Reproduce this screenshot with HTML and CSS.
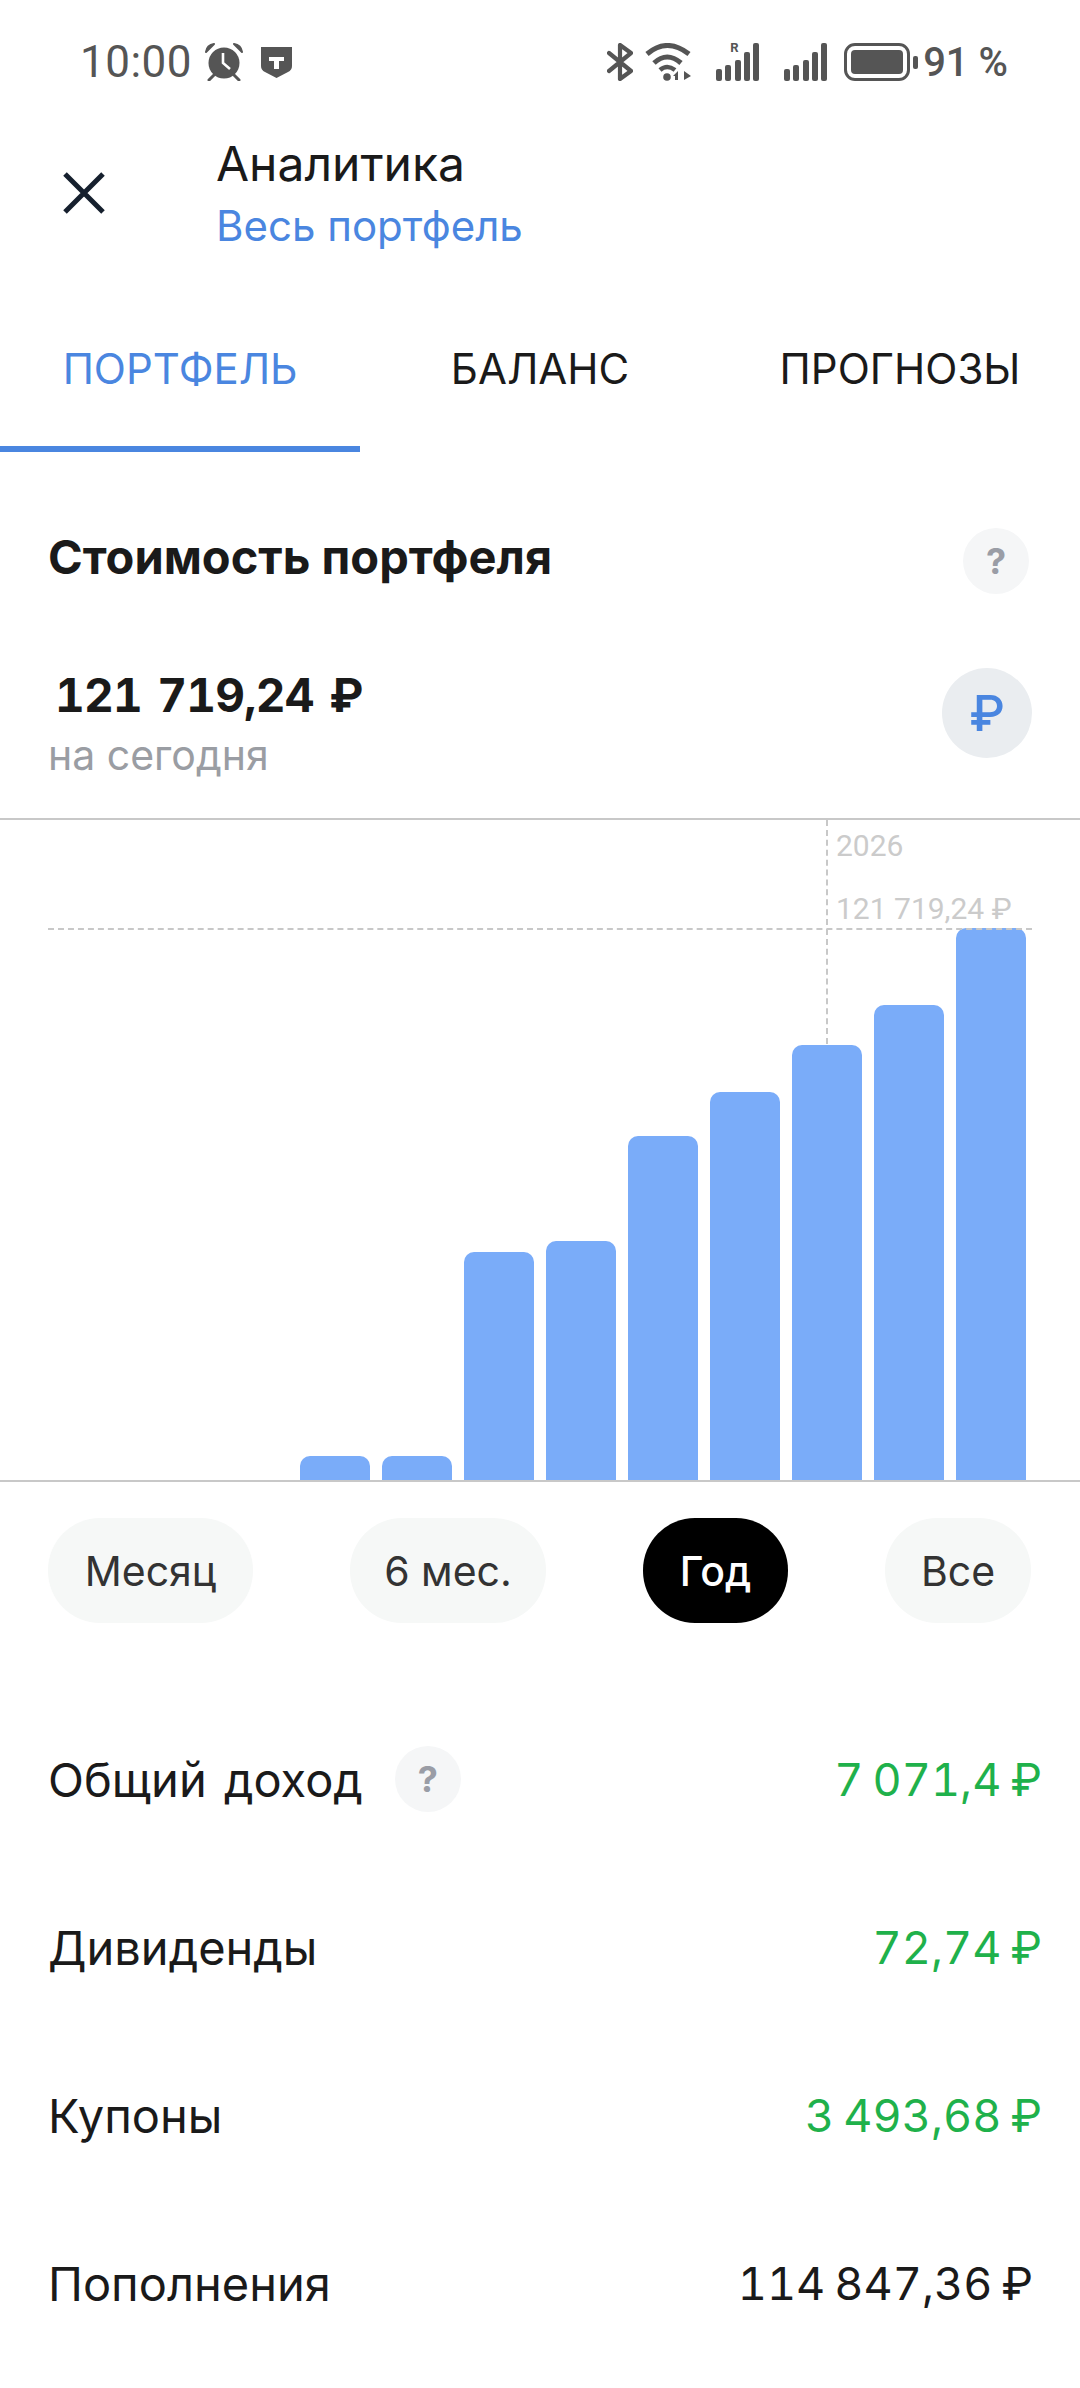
FILE: index.html

```html
<!DOCTYPE html>
<html lang="ru">
<head>
    <meta charset="UTF-8">
    <meta name="viewport" content="width=device-width, initial-scale=1.0">
    <title>Аналитика</title>
    <link rel="stylesheet" href="styles.css">
</head>
<body>
    <div class="status-bar">
        <div class="status-left">
            <span class="status-time">10:00</span>
            <svg class="icon-alarm" viewBox="0 0 38 38" width="38" height="38">
                <circle cx="19" cy="20" r="15.5" fill="#555"/>
                <path d="M1 9 Q2 2 9 1 Z M37 9 Q36 2 29 1 Z" fill="#555" stroke="#555" stroke-width="2" stroke-linejoin="round"/>
                <path d="M9 32 L4 37 M29 32 L34 37" stroke="#555" stroke-width="3" stroke-linecap="round"/>
                <path d="M18 10 V20 L25 26" fill="none" stroke="#fff" stroke-width="2.6"/>
            </svg>
            <svg class="icon-shield" viewBox="0 0 31 31" width="31" height="31">
                <path d="M0 0 H31 V19 Q31 23 27 25 L15.5 31 L4 25 Q0 23 0 19 Z" fill="#555"/>
                <path d="M8 10 H23 V14 H18 V22 H13 V14 H8 Z" fill="#fff"/>
            </svg>
        </div>
        <div class="status-right">
            <svg class="icon-bt" viewBox="0 0 26 38" width="26" height="38">
                <path d="M2 10 L24 28 L13 36 V2 L24 10 L2 28" fill="none" stroke="#555" stroke-width="4.2" stroke-linejoin="round" stroke-linecap="round"/>
            </svg>
            <svg class="icon-wifi" viewBox="0 0 46 38" width="48" height="38">
                <path d="M2 11 Q22 -6 44 11" fill="none" stroke="#555" stroke-width="5"/>
                <path d="M9 20 Q22 8 36 20" fill="none" stroke="#555" stroke-width="5"/>
                <path d="M15 27 Q22 21 30 27" fill="none" stroke="#555" stroke-width="4.6"/>
                <circle cx="22" cy="34" r="3.8" fill="#555"/>
                <path d="M28 33 L33 28 V37 H30 V33 Z M39 28 L46 33 L39 37 Z" fill="#555"/>
            </svg>
            <div class="signal signal-roaming">
                <span class="roaming">R</span>
                <i class="s1"></i><i class="s2"></i><i class="s3"></i><i class="s4"></i><i class="s5"></i>
            </div>
            <div class="signal signal-main">
                <i class="s1"></i><i class="s2"></i><i class="s3"></i><i class="s4"></i><i class="s5"></i>
            </div>
            <div class="battery"><div class="battery-fill"></div></div>
            <div class="battery-nub"></div>
            <span class="status-percent">91 %</span>
        </div>
    </div>

    <header class="top-bar">
        <svg class="icon-close" viewBox="0 0 44 44" width="44" height="44">
            <path d="M3 3 L41 41 M41 3 L3 41" stroke="#16202e" stroke-width="5"/>
        </svg>
        <div class="top-titles">
            <div class="top-title">Аналитика</div>
            <div class="top-sub">Весь портфель</div>
        </div>
    </header>

    <nav class="tabs">
        <a class="tab active">ПОРТФЕЛЬ</a>
        <a class="tab">БАЛАНС</a>
        <a class="tab">ПРОГНОЗЫ</a>
    </nav>

    <section class="value-head">
        <h2>Стоимость портфеля</h2>
        <span class="help">?</span>
    </section>

    <section class="value-row">
        <div>
            <div class="value-amount">121 719,24 ₽</div>
            <div class="value-date">на сегодня</div>
        </div>
        <span class="currency">₽</span>
    </section>

    <section class="chart">
        <div class="guide-h"></div>
        <div class="guide-v"></div>
        <div class="chart-year">2026</div>
        <div class="chart-value">121 719,24 ₽</div>
        <div class="bars">
            <div class="bar" style="height: 24px"></div>
            <div class="bar" style="height: 24px"></div>
            <div class="bar" style="height: 228px"></div>
            <div class="bar" style="height: 239px"></div>
            <div class="bar" style="height: 344px"></div>
            <div class="bar" style="height: 388px"></div>
            <div class="bar" style="height: 435px"></div>
            <div class="bar" style="height: 475px"></div>
            <div class="bar" style="height: 552px"></div>
        </div>
    </section>

    <div class="periods">
        <button class="pill pill-month">Месяц</button>
        <button class="pill pill-half">6 мес.</button>
        <button class="pill pill-year active">Год</button>
        <button class="pill pill-all">Все</button>
    </div>

    <section class="stats">
        <div class="stat">
            <div class="stat-label">Общий доход <span class="help">?</span></div>
            <div class="stat-value green">7 071,4 ₽</div>
        </div>
        <div class="stat">
            <div class="stat-label">Дивиденды</div>
            <div class="stat-value green">72,74 ₽</div>
        </div>
        <div class="stat">
            <div class="stat-label">Купоны</div>
            <div class="stat-value green">3 493,68 ₽</div>
        </div>
        <div class="stat">
            <div class="stat-label">Пополнения</div>
            <div class="stat-value">114 847,36 ₽</div>
        </div>
    </section>
</body>
</html>
```

FILE: styles.css

```css
* {
    margin: 0;
    padding: 0;
    box-sizing: border-box;
}

body {
    width: 1080px;
    height: 2388px;
    overflow: hidden;
    background: #fff;
    color: #1a1a1a;
    font-family: Inter, Roboto, sans-serif;
}

/* status bar */
.status-bar {
    height: 124px;
    padding: 0 72px 0 80px;
    display: flex;
    justify-content: space-between;
    align-items: center;
    color: #555;
    font-family: Roboto, sans-serif;
}

.status-left,
.status-right {
    display: flex;
    align-items: center;
}

.status-time {
    font-size: 44px;
    letter-spacing: 0.5px;
    margin-right: 13px;
}

.icon-shield {
    margin-left: 18px;
}

.icon-wifi {
    margin-left: 11px;
}

.signal {
    position: relative;
    width: 43px;
    height: 38px;
    display: flex;
    align-items: flex-end;
    justify-content: space-between;
}

.signal-roaming {
    margin-left: 24px;
}

.signal-main {
    margin-left: 25px;
}

.signal i {
    width: 6px;
    background: #555;
    border-radius: 2px;
}

.s1 { height: 12px; }
.s2 { height: 16px; }
.s3 { height: 21px; }
.s4 { height: 29px; }
.s5 { height: 38px; }

.roaming {
    position: absolute;
    left: 14px;
    top: -3px;
    font-size: 13px;
    font-weight: 700;
}

.battery {
    margin-left: 17px;
    width: 66px;
    height: 38px;
    border: 3px solid #555;
    border-radius: 11px;
    padding: 4px;
}

.battery-fill {
    height: 100%;
    background: #555;
    border-radius: 4px;
}

.battery-nub {
    width: 5px;
    height: 13px;
    margin-left: 3px;
    background: #555;
    border-radius: 2px;
}

.status-percent {
    font-size: 40px;
    font-weight: 500;
    margin-left: 5px;
}

/* header */
.top-bar {
    height: 166px;
    padding-left: 62px;
    display: flex;
    align-items: flex-start;
}

.icon-close {
    margin-top: 47px;
}

.top-titles {
    margin-left: 110px;
    padding-top: 10px;
}

.top-title {
    font-size: 48px;
    line-height: 60px;
}

.top-sub {
    margin-top: 7px;
    font-size: 42px;
    line-height: 50px;
    color: #4a86e0;
}

.tabs {
    height: 162px;
    display: grid;
    grid-template-columns: repeat(3, 1fr);
}

.tab {
    display: flex;
    align-items: center;
    justify-content: center;
    font-size: 42px;
    border-bottom: 6px solid transparent;
}

.tab.active {
    color: #4a86e0;
    border-bottom-color: #4a86e0;
}

/* portfolio value */
.value-head {
    margin-top: 76px;
    height: 66px;
    padding: 0 51px 0 48px;
    display: flex;
    justify-content: space-between;
    align-items: center;
}

.value-head h2 {
    padding-bottom: 10px;
    font-size: 47px;
    font-weight: 700;
}

.help {
    display: inline-flex;
    align-items: center;
    justify-content: center;
    width: 66px;
    height: 66px;
    border-radius: 50%;
    background: #f5f6f7;
    color: #9a9da6;
    font-size: 36px;
    font-weight: 700;
}

.value-row {
    height: 224px;
    padding: 66px 48px 0 48px;
    display: flex;
    justify-content: space-between;
    align-items: flex-start;
}

.value-amount {
    padding-left: 7px;
    font-size: 46px;
    line-height: 70px;
    font-weight: 700;
    font-variant-numeric: tabular-nums;
    letter-spacing: -0.8px;
    word-spacing: 4px;
}

.value-date {
    font-size: 41px;
    line-height: 50px;
    color: #9a9da3;
}

.currency {
    margin-top: 8px;
    width: 90px;
    height: 90px;
    border-radius: 50%;
    background: #eaedf0;
    color: #4a86e0;
    font-size: 50px;
    font-weight: 500;
    display: flex;
    align-items: center;
    justify-content: center;
}

/* chart */
.chart {
    position: relative;
    height: 664px;
    border-top: 2px solid #c8c8c8;
    border-bottom: 2px solid #c8c8c8;
}

.bars {
    height: 100%;
    padding-right: 54px;
    display: flex;
    justify-content: flex-end;
    align-items: flex-end;
    gap: 12px;
}

.bar {
    width: 70px;
    background: #7aacf9;
    border-radius: 10px 10px 0 0;
}

.guide-h {
    position: absolute;
    top: 108px;
    left: 48px;
    width: 984px;
    border-top: 2px dashed #c8c8c8;
}

.guide-v {
    position: absolute;
    top: 0;
    left: 826px;
    height: 224px;
    border-left: 2px dashed #c8c8c8;
}

.chart-year,
.chart-value {
    position: absolute;
    left: 836px;
    font-family: Roboto, sans-serif;
    font-size: 30px;
    line-height: 36px;
    color: #cbcbcb;
}

.chart-year {
    top: 8px;
}

.chart-value {
    top: 71px;
}

/* period pills */
.periods {
    margin-top: 36px;
    padding: 0 49px 0 48px;
    display: flex;
    justify-content: space-between;
}

.pill {
    height: 105px;
    border: none;
    border-radius: 52px;
    background: #f6f8f7;
    color: #333;
    font-family: inherit;
    font-size: 41px;
}

.pill-month { width: 205px; }
.pill-half { width: 196px; }
.pill-year { width: 145px; }
.pill-all { width: 146px; }

.pill.active {
    background: #000;
    color: #fff;
    font-weight: 500;
}

/* totals */
.stats {
    margin-top: 72px;
}

.stat {
    height: 168px;
    padding: 0 48px;
    display: flex;
    justify-content: space-between;
    align-items: center;
    font-size: 47px;
}

.stat-label {
    display: flex;
    align-items: center;
    word-spacing: 4px;
}

.stat-label .help {
    margin-left: 32px;
}

.stat-value {
    margin-right: -1px;
    font-size: 45px;
    font-variant-numeric: tabular-nums;
    word-spacing: -3px;
}

.stat-value.green {
    margin-right: -10px;
    color: #1fb14b;
}
```
